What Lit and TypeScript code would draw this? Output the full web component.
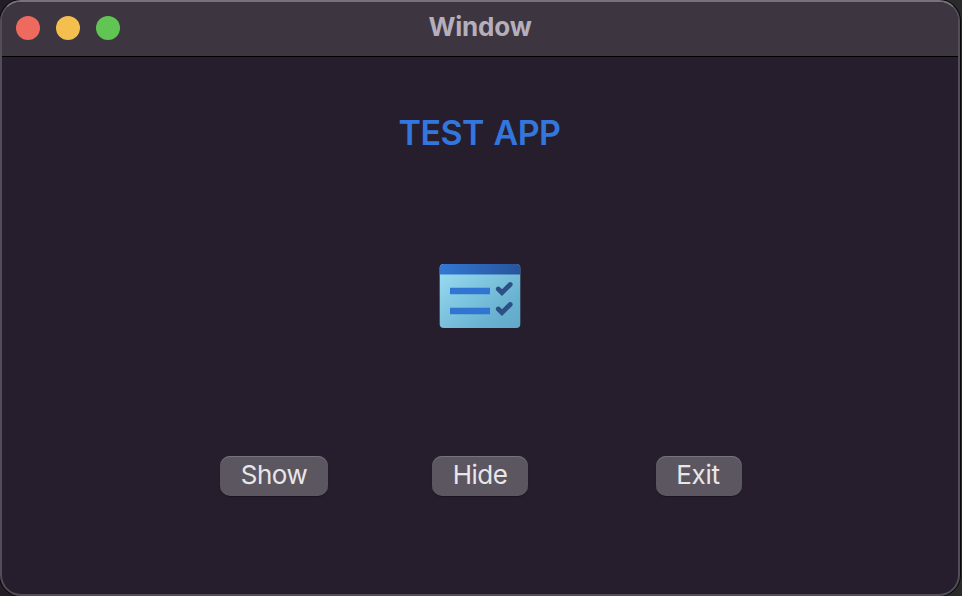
import { LitElement, html, css, svg } from "lit";
import { customElement, property } from "lit/decorators.js";

@customElement("push-button")
class PushButton extends LitElement {
  @property() label = "";

  static styles = css`
    :host { display: block; }
    .button {
      display: block;
      width: 100%;
      height: 40px;
      padding: 0 0 2px;
      border: 0;
      border-radius: 10px;
      background: #5c5660;
      box-shadow: inset 0 1px 0 #77727b, 0 1px 1px rgba(0, 0, 0, 0.35);
      color: #e8e6e9;
      font: 430 26px/38px Inter, sans-serif;
      letter-spacing: var(--tracking, -0.5px);
      text-align: center;
      white-space: nowrap;
    }
    :host(.exit) .button { padding-right: 2px; }
  `;

  render() {
    return html`<button class="button">${this.label}</button>`;
  }
}

@customElement("app-root")
class AppRoot extends LitElement {
  static styles = css`
    :host {
      display: block;
      width: 962px;
      height: 596px;
      overflow: hidden;
      background: linear-gradient(90deg, #241d28, #2a2a2a);
    }
    .window {
      box-sizing: border-box;
      width: 960px;
      height: 596px;
      border: 2px solid #534d58;
      border-top-color: #77727b;
      border-radius: 21px;
      background: #261e2d;
      box-shadow: 0 0 0 1px #0b090c;
      overflow: hidden;
      display: flex;
      flex-direction: column;
      font-family: Inter, sans-serif;
    }
    .titlebar {
      box-sizing: border-box;
      height: 55px;
      flex: none;
      display: grid;
      grid-template-columns: 1fr auto 1fr;
      background: #3d3641;
      border-bottom: 1px solid #000;
    }
    .lights { display: flex; gap: 16px; padding: 14px 0 0 14px; }
    .light { width: 24px; height: 24px; border-radius: 50%; }
    .close { background: #ee6a5f; }
    .minimize { background: #f5bf4f; }
    .zoom { background: #61c554; }
    .title {
      font: 700 26px/50px Inter, sans-serif;
      letter-spacing: -0.2px;
      color: #b5aebc;
    }
    .content { flex: 1; display: flex; flex-direction: column; align-items: center; }
    .heading {
      margin: 56px 1px 0 0;
      font: 600 34px/40px Inter, sans-serif;
      letter-spacing: -0.55px;
      word-spacing: 1.5px;
      color: #3376de;
      white-space: nowrap;
    }
    .logo { display: block; width: 84px; height: 68px; margin-top: 109px; }
    .actions { display: flex; align-self: stretch; margin: 126px 0 0 218px; }
    .show { width: 108px; margin-right: 104px; }
    .hide { width: 96px; margin-right: 128px; }
    .exit { width: 86px; --tracking: -0.3px; }
  `;

  render() {
    return html`
      <main class="window">
        <header class="titlebar">
          <div class="lights">
            <span class="light close"></span>
            <span class="light minimize"></span>
            <span class="light zoom"></span>
          </div>
          <div class="title">Window</div>
        </header>
        <section class="content">
          <h1 class="heading">TEST APP</h1>
          <svg class="logo" viewBox="438 262 84 68">
            ${svg`
              <defs>
                <linearGradient id="sheet" x1="0" y1="0" x2="1" y2="1">
                  <stop offset="0" stop-color="#9cdff4"></stop>
                  <stop offset="0.75" stop-color="#68b1d0"></stop>
                  <stop offset="1" stop-color="#62a9c9"></stop>
                </linearGradient>
                <linearGradient id="bar">
                  <stop offset="0" stop-color="#3378d4"></stop>
                  <stop offset="1" stop-color="#28549b"></stop>
                </linearGradient>
              </defs>
              <rect x="439.7" y="264" width="80.6" height="64" rx="4" fill="url(#sheet)"></rect>
              <path d="M439.7 274.5V268a4 4 0 0 1 4-4h72.600a4 4 0 0 1 4 4v6.500z" fill="url(#bar)"></path>
              <path d="M450 291h40M450 311h40" stroke="#3175d2" stroke-width="6.400"></path>
              <path d="M498.300 289l3.700 3.700 8.200-8.200M498.300 309l3.700 3.700 8.200-8.200" fill="none" stroke="#2a5084" stroke-width="4.800" stroke-linecap="round"></path>
            `}
          </svg>
          <div class="actions">
            <push-button class="show" label="Show"></push-button>
            <push-button class="hide" label="Hide"></push-button>
            <push-button class="exit" label="Exit"></push-button>
          </div>
        </section>
      </main>
    `;
  }
}
